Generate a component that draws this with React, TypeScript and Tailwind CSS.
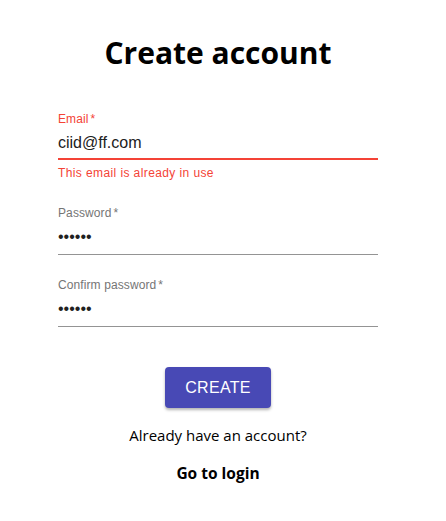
const Field = ({
    label,
    value,
    error,
    helper,
}: {
    label: string;
    value: string;
    error?: boolean;
    helper?: string;
}) => {
    return (
        <div className="flex flex-col">
            <label className={`text-[12px] leading-[14px] tracking-[0.1px] ${error ? 'text-[#f44336]' : 'text-[#757575]'}`}>
                {label}
                <span className="ml-[2px]">*</span>
            </label>
            <div
                className={`mt-[6px] pt-[1px] ${
                    error ? 'h-[28px] border-b-2 border-[#f44336]' : 'h-[29px] border-b border-[#949494]'
                }`}
            >
                <span className="block text-[16px] leading-[19px] text-[#212121]">{value}</span>
            </div>
            {helper && (
                <p className="text-[12px] leading-[14px] mt-[6px] tracking-[0.4px] text-[#f44336]">{helper}</p>
            )}
        </div>
    );
};

const App = () => {
    return (
        <div className="min-h-[521px] w-[436px] bg-white flex flex-col items-center font-['Liberation_Sans',Arial,sans-serif]">
            <h1 className="mt-[33px] text-[30px] leading-[40px] font-bold text-black font-['Open_Sans',sans-serif]">
                Create account
            </h1>
            <div className="w-[320px] mt-[39px] flex flex-col">
                <Field label="Email" value="ciid@ff.com" error helper="This email is already in use" />
                <div className="mt-[26px]">
                    <Field label="Password" value="••••••" />
                </div>
                <div className="mt-[23px]">
                    <Field label="Confirm password" value="••••••" />
                </div>
            </div>
            <button className="mt-[40px] h-[41px] w-[106px] rounded bg-[#4849b5] text-white text-[16px] tracking-[0.3px] shadow-[0_2px_3px_rgba(0,0,0,0.3)]">
                CREATE
            </button>
            <p className="mt-[16px] text-[15px] leading-[22px] text-black font-['Open_Sans',sans-serif]">
                Already have an account?
            </p>
            <p className="mt-[16px] text-[15.5px] leading-[22px] font-bold text-black font-['Open_Sans',sans-serif]">
                Go to login
            </p>
        </div>
    );
};

export default App;
